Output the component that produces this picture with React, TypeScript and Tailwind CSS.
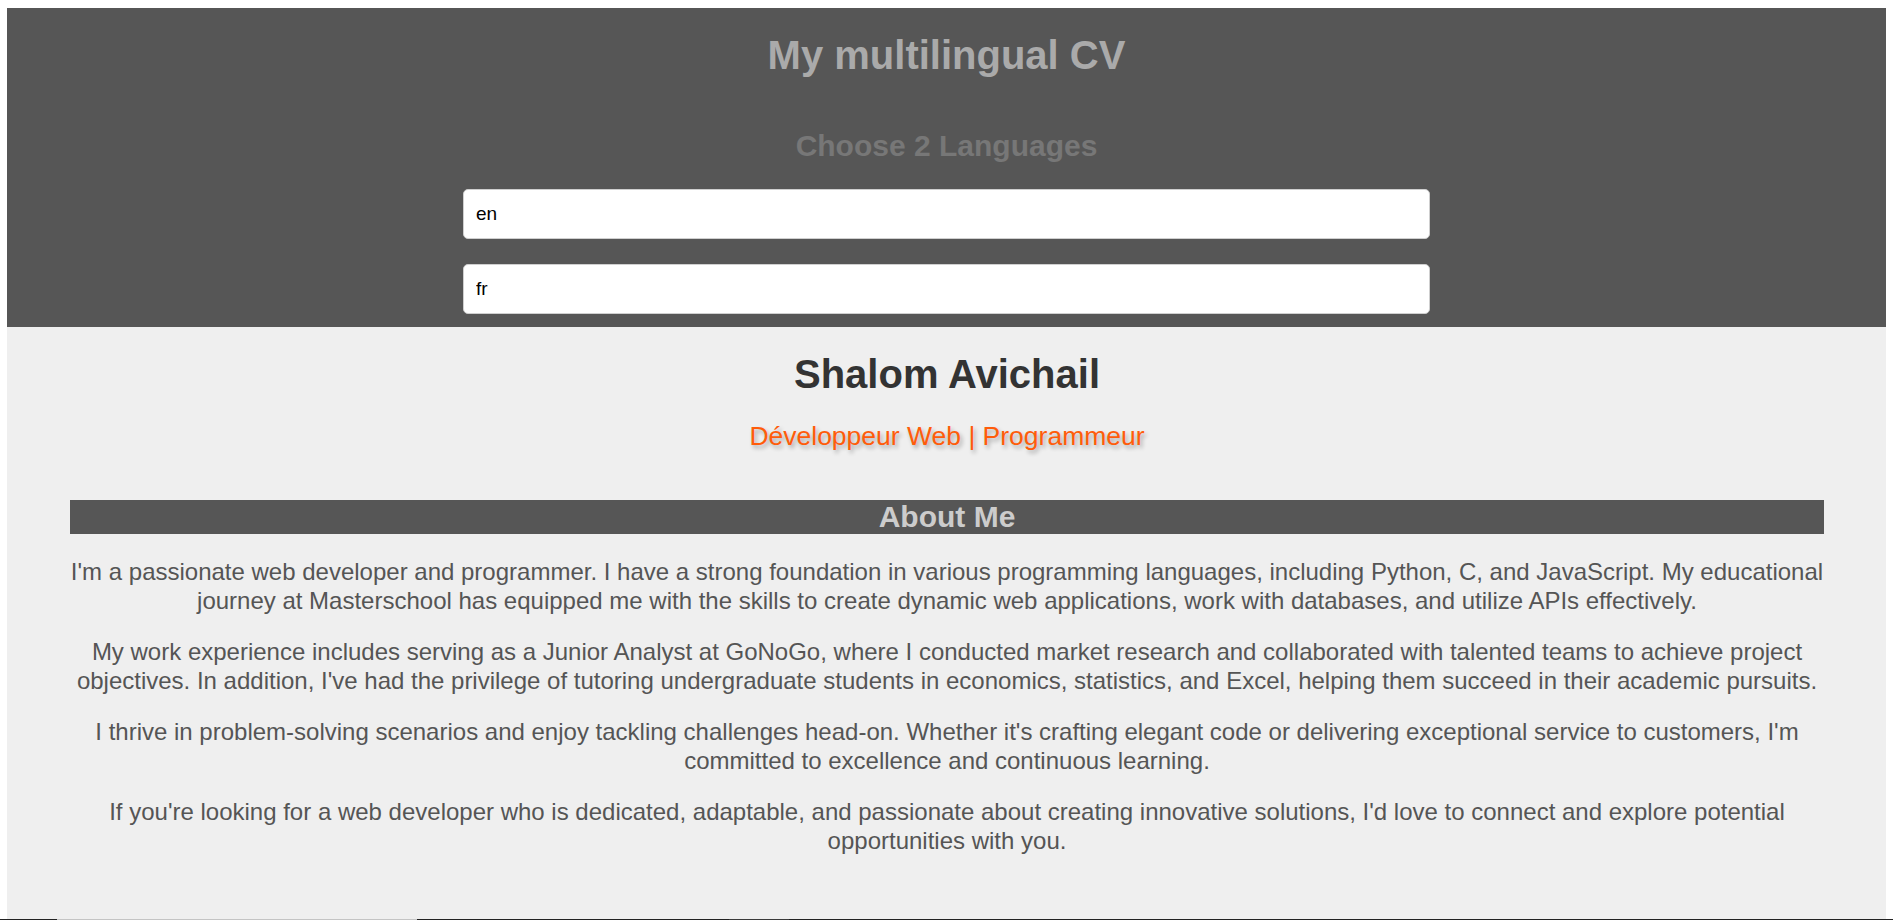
import React from "react";

const paragraphs = [
  "I'm a passionate web developer and programmer. I have a strong foundation in various programming languages, including Python, C, and JavaScript. My educational journey at Masterschool has equipped me with the skills to create dynamic web applications, work with databases, and utilize APIs effectively.",
  "My work experience includes serving as a Junior Analyst at GoNoGo, where I conducted market research and collaborated with talented teams to achieve project objectives. In addition, I've had the privilege of tutoring undergraduate students in economics, statistics, and Excel, helping them succeed in their academic pursuits.",
  "I thrive in problem-solving scenarios and enjoy tackling challenges head-on. Whether it's crafting elegant code or delivering exceptional service to customers, I'm committed to excellence and continuous learning.",
  "If you're looking for a web developer who is dedicated, adaptable, and passionate about creating innovative solutions, I'd love to connect and explore potential opportunities with you.",
];

const LangInput = ({ value, className }: { value: string; className?: string }) => (
  <input
    type="text"
    defaultValue={value}
    className={`block w-[967px] h-[50px] mx-auto rounded-[5px] border border-[#cfcfcf] bg-white px-3 text-[19px] text-black outline-none ${className ?? ""}`}
  />
);

export default function App() {
  return (
    <div className="min-h-screen bg-white font-['Liberation_Sans',Arial,sans-serif]">
      <div className="px-[7px] pt-2">
        {/* language picker */}
        <header className="bg-[#565656] pt-6 pb-[13px] text-center">
          <h1 className="text-[40px] leading-[46px] font-bold text-[#aaaaaa]">My multilingual CV</h1>
          <h2 className="mt-[51px] text-[30px] leading-[34px] font-bold text-[#777777]">Choose 2 Languages</h2>
          <LangInput value="en" className="mt-[26px]" />
          <LangInput value="fr" className="mt-[25px]" />
        </header>

        <main className="bg-[#efefef] pt-6 pb-[64px] pl-[63px] pr-[62px] text-center">
          <h1 className="text-[40px] leading-[46px] font-bold text-[#333333]">Shalom Avichail</h1>
          <p className="mt-6 text-[26.5px] leading-[30px] text-[#ff5c0a] [text-shadow:2px_3px_4px_rgba(0,0,0,0.3)]">
            Développeur Web | Programmeur
          </p>

          <section className="mt-[49px]">
            <h2 className="bg-[#565656] text-[30px] leading-[34px] font-bold text-[#cccccc]">About Me</h2>
            <div className="mt-[23px] flex flex-col gap-[22px] text-[24px] leading-[29px] text-[#555555]">
              {paragraphs.map((p, i) => (
                <p key={i}>{p}</p>
              ))}
            </div>
          </section>
        </main>
      </div>

      <section className="bg-[#222222] h-[200px]">
        <div className="flex h-full">
          <div className="ml-[57px] w-[360px] h-full bg-[#c4c4c4]" />
          <div className="ml-[312px] w-[60px] h-full bg-[#3a3a3a]" />
        </div>
      </section>
    </div>
  );
}
